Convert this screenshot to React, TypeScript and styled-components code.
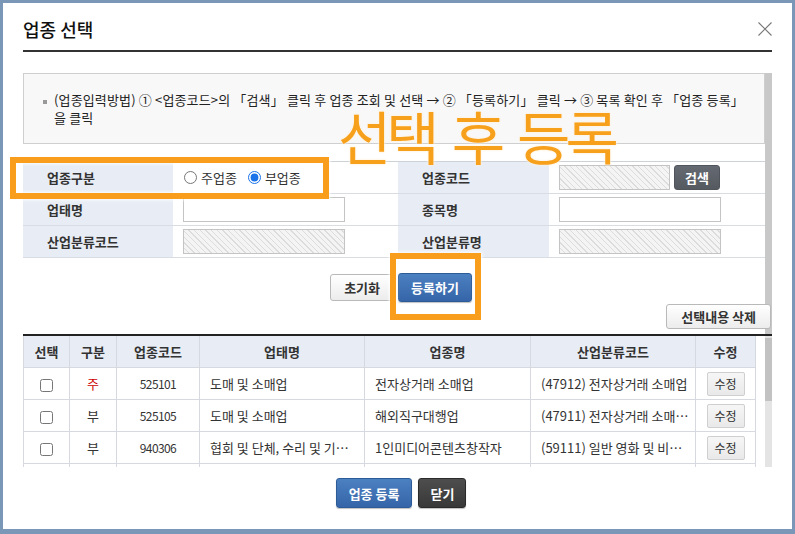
import React from 'react';
import styled, { createGlobalStyle, css } from 'styled-components';

const GlobalStyle = createGlobalStyle`
  body {
    margin: 0;
    background: #fff;
    font-family: "Noto Sans CJK KR", "Noto Sans", sans-serif;
    font-size: 12px;
    color: #333;
  }
`;

const Frame = styled.div`
  position: relative;
  width: 795px;
  height: 534px;
  box-sizing: border-box;
  border: 3px solid #7a97b7;
  border-bottom-width: 5px;
  background: #fff;
  padding: 0 20px;
  display: flex;
  flex-direction: column;
  overflow: hidden;
`;

const Header = styled.div`
  height: 49px;
  padding-top: 5px;
  box-sizing: border-box;
  display: flex;
  align-items: center;
  justify-content: space-between;
  border-bottom: 2px solid #333;
`;

const Title = styled.h1`
  margin: 0;
  font-size: 18px;
  font-weight: 500;
  color: #111;
`;

const CloseButton = styled.button`
  border: 0;
  background: none;
  padding: 0;
  margin-right: -1px;
  width: 16px;
  height: 16px;
  display: flex;
`;

const Upper = styled.div`
  margin-top: 21px;
  height: 261px;
  display: flex;
`;

const UpperContent = styled.div`
  flex: 1;
  display: flex;
  flex-direction: column;
  position: relative;
  z-index: 1;
`;

const UpperBar = styled.div`
  width: 7px;
  background: #c8c8c8;
`;

const InfoBox = styled.div`
  position: relative;
  height: 71px;
  box-sizing: border-box;
  border: 1px solid #cfcfcf;
  background: #f8f8f8;
  padding: 17px 10px 0 30px;
  line-height: 18px;
  font-size: 13px;
  color: #222;
  letter-spacing: 0.15px;

  &::before {
    content: '';
    position: absolute;
    left: 19px;
    top: 26px;
    width: 4px;
    height: 4px;
    background: #999;
  }
`;

const FormTable = styled.div`
  margin-top: 17px;
  border-top: 1px solid #cdd2d9;
`;

const FormRow = styled.div`
  display: grid;
  grid-template-columns: 150px 225px 151px 216px;
  height: 32px;
  box-sizing: border-box;
  border-bottom: 1px solid #d9dde3;
`;

const LabelCell = styled.div`
  background: #e8edf5;
  display: flex;
  align-items: center;
  padding-left: 24px;
  font-size: 13px;
  font-weight: 700;
  color: #333;
`;

const ValueCell = styled.div`
  display: flex;
  align-items: center;
  padding-left: 10px;
  gap: 4px;
`;

const RadioLabel = styled.label`
  display: flex;
  align-items: center;
  gap: 4px;
  font-size: 13px;
  color: #333;
  margin-right: 6px;

  input {
    margin: 0 0 0 1px;
    width: 13px;
    height: 13px;
    accent-color: #1a73e8;
  }
`;

const TextInput = styled.input<{ $w: number; $hatched?: boolean }>`
  width: ${(p) => p.$w}px;
  height: 25px;
  box-sizing: border-box;
  border: 1px solid #c4c4c4;
  padding: 0 4px;
  margin: 0;
  font: inherit;
  ${(p) =>
    p.$hatched &&
    css`
      background: repeating-linear-gradient(
        45deg,
        #f4f4f4 0px,
        #f4f4f4 3px,
        #dcdcdc 3px,
        #dcdcdc 4px
      );
    `}
`;

const Button = styled.button<{ $variant: 'gray' | 'blue' | 'dark' | 'slate'; $h?: number }>`
  height: ${(p) => p.$h ?? 27}px;
  padding: 0 12px;
  box-sizing: border-box;
  font-family: inherit;
  font-size: 13px;
  font-weight: 700;
  border-radius: 3px;
  cursor: pointer;
  white-space: nowrap;
  ${(p) =>
    p.$variant === 'gray' &&
    css`
      color: #333;
      border: 1px solid #b9b9b9;
      background: linear-gradient(#ffffff, #ececec);
    `}
  ${(p) =>
    p.$variant === 'blue' &&
    css`
      color: #fff;
      border: 1px solid #2c5b98;
      background: linear-gradient(#4b80c1, #3565a8);
      box-shadow: 0 1px 1px rgba(0, 0, 0, 0.25);
    `}
  ${(p) =>
    p.$variant === 'dark' &&
    css`
      color: #fff;
      border: 1px solid #2a2a2a;
      background: linear-gradient(#4e4e4e, #383838);
      box-shadow: 0 1px 1px rgba(0, 0, 0, 0.25);
      padding: 0 11px;
    `}
  ${(p) =>
    p.$variant === 'slate' &&
    css`
      color: #fff;
      border: 1px solid #50555c;
      background: linear-gradient(#656a72, #555a61);
      padding: 0 10px;
    `}
`;

const ActionRow = styled.div`
  margin-top: 15px;
  display: flex;
  justify-content: center;
  align-items: center;
  gap: 4px;
  padding-left: 14px;

  button:first-child {
    padding: 0 13px;
  }
`;

const DeleteRow = styled.div`
  margin-top: 2px;
  display: flex;
  justify-content: flex-end;
  margin-right: -6px;

  button {
    padding: 0 14px;
  }
`;

const TableSection = styled.div`
  border-top: 2px solid #222;
  height: 131px;
  display: flex;
  overflow: hidden;
`;

const TableArea = styled.div`
  width: 732px;
`;

const ListTable = styled.table`
  width: 732px;
  table-layout: fixed;
  border-collapse: collapse;
  font-size: 13px;

  th,
  td {
    border: 1px solid #d6dae0;
    border-top: 0;
    height: 31px;
    padding: 0;
    white-space: nowrap;
    overflow: hidden;
    text-overflow: ellipsis;
  }

  th {
    background: #e8edf5;
    font-size: 13px;
    font-weight: 700;
    color: #333;
    height: 31px;
  }
`;

const Cell = styled.td<{ $align?: 'left' | 'center'; $red?: boolean; $num?: boolean }>`
  text-align: ${(p) => p.$align ?? 'center'};
  padding-left: ${(p) => (p.$align === 'left' ? '10px' : '0')} !important;
  padding-right: ${(p) => (p.$align === 'left' ? '6px' : '0')} !important;
  color: ${(p) => (p.$red ? '#c00' : '#333')};
  ${(p) =>
    p.$num &&
    css`
      font-size: 12px;
      letter-spacing: -0.6px;
    `}

  input[type='checkbox'] {
    margin: 0;
    width: 13px;
    height: 13px;
    vertical-align: middle;
  }
`;

const SmallButton = styled.button`
  height: 24px;
  width: 38px;
  padding: 0;
  font-family: inherit;
  font-size: 12px;
  color: #333;
  border: 1px solid #cfcfcf;
  border-radius: 2px;
  background: linear-gradient(#f6f6f6, #e9e9e9);
  vertical-align: middle;
`;

const TableScroll = styled.div`
  margin-left: 10px;
  width: 7px;
  background: #e4e4e4;
`;

const Thumb = styled.div`
  margin-top: 2px;
  height: 63px;
  background: #c2c2c2;
`;

const Footer = styled.div`
  flex: 1;
  display: flex;
  justify-content: center;
  align-items: flex-start;
  gap: 6px;
  padding-top: 11px;
  padding-left: 7px;
`;

const Highlight = styled.div<{ $top: number; $left: number; $w: number; $h: number }>`
  position: absolute;
  top: ${(p) => p.$top}px;
  left: ${(p) => p.$left}px;
  width: ${(p) => p.$w}px;
  height: ${(p) => p.$h}px;
  box-sizing: border-box;
  border: 6px solid #f99d1c;
  box-shadow: 0 0 3px 1px rgba(255, 255, 255, 0.9), inset 0 0 3px 1px rgba(255, 255, 255, 0.9);
  pointer-events: none;
  z-index: 5;
`;

const Caption = styled.div`
  position: absolute;
  top: 92px;
  left: 335px;
  font-size: 58px;
  line-height: 80px;
  letter-spacing: -5px;
  word-spacing: 9px;
  color: #f7a01b;
  text-shadow: 0 0 3px #fff, 0 0 2px #ffd9a0;
  pointer-events: none;
  z-index: 6;
`;

type Row = {
  kind: string;
  code: string;
  type: string;
  item: string;
  ind: string;
};

const rows: Row[] = [
  { kind: '주', code: '525101', type: '도매 및 소매업', item: '전자상거래 소매업', ind: '(47912) 전자상거래 소매업' },
  { kind: '부', code: '525105', type: '도매 및 소매업', item: '해외직구대행업', ind: '(47911) 전자상거래 소매 중개업' },
  { kind: '부', code: '940306', type: '협회 및 단체, 수리 및 기타 개인 서비스업', item: '1인미디어콘텐츠창작자', ind: '(59111) 일반 영화 및 비디오물 제작업' },
  { kind: '부', code: '749909', type: '사업서비스업', item: '그 외 기타 사업지원', ind: '(75999) 그 외 기타 사업지원' },
];

export default function App() {
  return (
    <>
      <GlobalStyle />
      <Frame>
        <Header>
          <Title>업종 선택</Title>
          <CloseButton aria-label="닫기">
            <svg width="16" height="16" viewBox="0 0 16 16">
              <path d="M1.5 1.5 L14.5 14.5 M14.5 1.5 L1.5 14.5" stroke="#777" strokeWidth="1.1" fill="none" />
            </svg>
          </CloseButton>
        </Header>

        <Upper>
          <UpperContent>
            <InfoBox>
              (업종입력방법) ① &lt;업종코드&gt;의 「검색」 클릭 후 업종 조회 및 선택 → ② 「등록하기」 클릭 → ③ 목록 확인 후 「업종 등록」
              <br />을 클릭
            </InfoBox>

            <FormTable>
              <FormRow>
                <LabelCell>업종구분</LabelCell>
                <ValueCell>
                  <RadioLabel>
                    <input type="radio" name="kind" /> 주업종
                  </RadioLabel>
                  <RadioLabel>
                    <input type="radio" name="kind" defaultChecked /> 부업종
                  </RadioLabel>
                </ValueCell>
                <LabelCell>업종코드</LabelCell>
                <ValueCell>
                  <TextInput $w={111} $hatched readOnly />
                  <Button $variant="slate" $h={25}>검색</Button>
                </ValueCell>
              </FormRow>
              <FormRow>
                <LabelCell>업태명</LabelCell>
                <ValueCell>
                  <TextInput $w={162} />
                </ValueCell>
                <LabelCell>종목명</LabelCell>
                <ValueCell>
                  <TextInput $w={162} />
                </ValueCell>
              </FormRow>
              <FormRow>
                <LabelCell>산업분류코드</LabelCell>
                <ValueCell>
                  <TextInput $w={162} $hatched readOnly />
                </ValueCell>
                <LabelCell>산업분류명</LabelCell>
                <ValueCell>
                  <TextInput $w={162} $hatched readOnly />
                </ValueCell>
              </FormRow>
            </FormTable>

            <ActionRow>
              <Button $variant="gray" $h={27}>초기화</Button>
              <Button $variant="blue" $h={29}>등록하기</Button>
            </ActionRow>

            <DeleteRow>
              <Button $variant="gray" $h={25}>선택내용 삭제</Button>
            </DeleteRow>
          </UpperContent>
          <UpperBar />
        </Upper>

        <TableSection>
          <TableArea>
            <ListTable>
              <colgroup>
                <col style={{ width: 46 }} />
                <col style={{ width: 47 }} />
                <col style={{ width: 83 }} />
                <col style={{ width: 165 }} />
                <col style={{ width: 166 }} />
                <col style={{ width: 165 }} />
                <col style={{ width: 60 }} />
              </colgroup>
              <thead>
                <tr>
                  <th>선택</th>
                  <th>구분</th>
                  <th>업종코드</th>
                  <th>업태명</th>
                  <th>업종명</th>
                  <th>산업분류코드</th>
                  <th>수정</th>
                </tr>
              </thead>
              <tbody>
                {rows.map((r) => (
                  <tr key={r.code}>
                    <Cell>
                      <input type="checkbox" />
                    </Cell>
                    <Cell $red={r.kind === '주'}>{r.kind}</Cell>
                    <Cell $num>{r.code}</Cell>
                    <Cell $align="left">{r.type}</Cell>
                    <Cell $align="left">{r.item}</Cell>
                    <Cell $align="left">{r.ind}</Cell>
                    <Cell>
                      <SmallButton>수정</SmallButton>
                    </Cell>
                  </tr>
                ))}
              </tbody>
            </ListTable>
          </TableArea>
          <TableScroll>
            <Thumb />
          </TableScroll>
        </TableSection>

        <Footer>
          <Button $variant="blue" $h={30}>업종 등록</Button>
          <Button $variant="dark" $h={30}>닫기</Button>
        </Footer>

        <Highlight $top={154} $left={7} $w={319} $h={42} />
        <Highlight $top={250} $left={387} $w={91} $h={67} />
        <Caption>선택 후 등록</Caption>
      </Frame>
    </>
  );
}
